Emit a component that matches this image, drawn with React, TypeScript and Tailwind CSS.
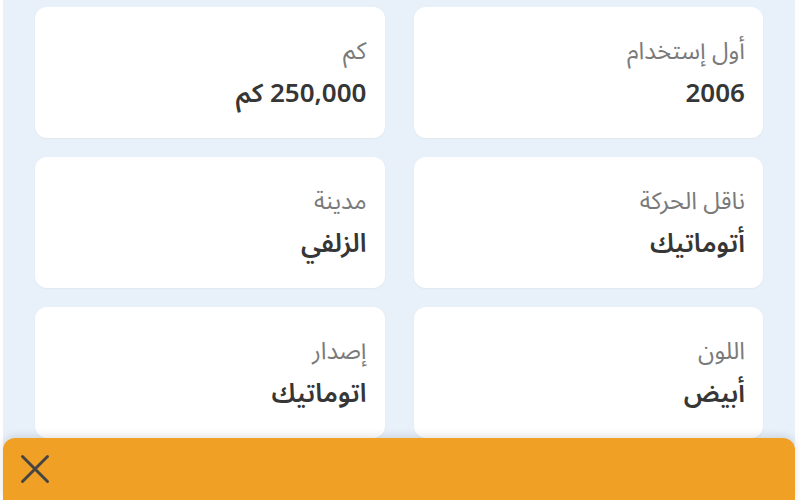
import React from "react";
import { X } from "lucide-react";

const specs = [
  { label: "أول إستخدام", value: "2006" },
  { label: "كم", value: "250,000 كم" },
  { label: "ناقل الحركة", value: "أتوماتيك" },
  { label: "مدينة", value: "الزلفي" },
  { label: "اللون", value: "أبيض" },
  { label: "إصدار", value: "اتوماتيك" },
];

export default function App() {
  return (
    <div
      className="relative w-[800px] h-[500px] overflow-hidden bg-white"
      style={{ fontFamily: '"Noto Sans Arabic", "Noto Sans", "DejaVu Sans", sans-serif' }}
    >
      <div
        dir="rtl"
        className="ml-[3px] mr-[5px] h-full bg-[#e8f0f9] px-8 pt-[7px] grid grid-cols-2 gap-x-[29px] gap-y-[19px] content-start"
      >
        {specs.map((s) => (
          <div
            key={s.label}
            className="h-[131px] rounded-xl bg-white px-[18px] pt-[31px] shadow-[0_1px_2px_rgba(0,0,0,0.04)]"
          >
            <p className="text-[24px] leading-[28px] text-[#7a7a7a]">{s.label}</p>
            <p className="mt-[13px] text-[26px] leading-[30px] font-semibold text-[#363636]">
              {s.value}
            </p>
          </div>
        ))}
      </div>
      <div className="absolute bottom-0 left-[3px] right-[5px] h-[62px] rounded-t-xl bg-[#f0a125] shadow-[0_-2px_8px_rgba(0,0,0,0.12)] flex items-center pl-[7px]">
        <X size={50} strokeWidth={1.4} className="text-[#444]" />
      </div>
    </div>
  );
}
